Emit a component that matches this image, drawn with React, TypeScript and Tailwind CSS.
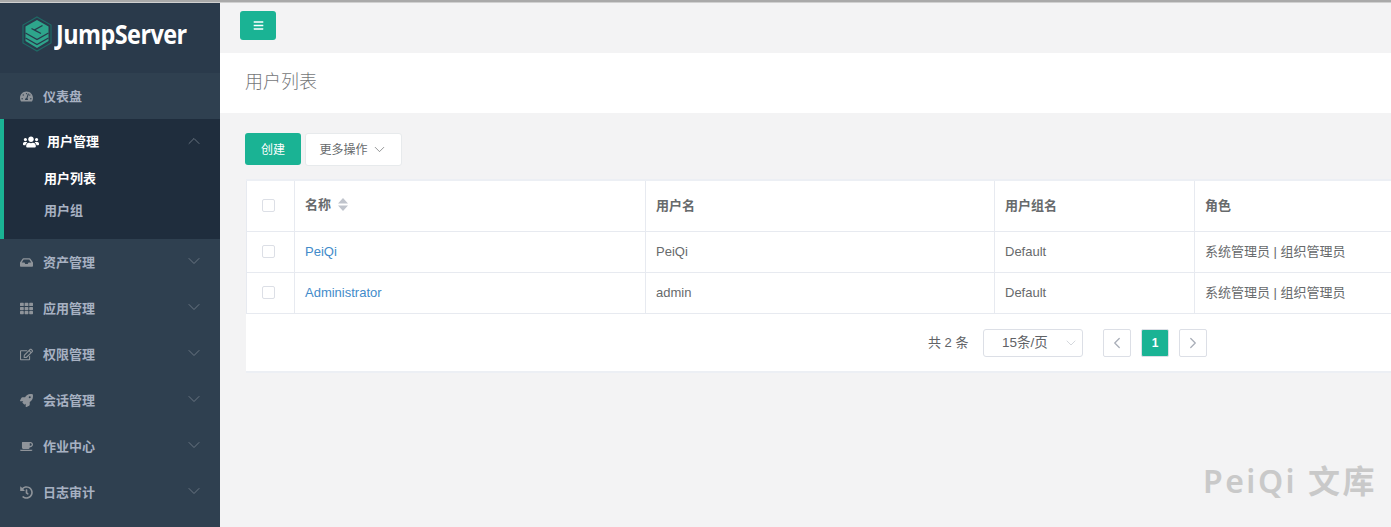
import { ChevronDown, ChevronUp, ChevronLeft, ChevronRight } from 'lucide-react';
import { FaBars, FaCoffee, FaHistory, FaInbox, FaRegEdit, FaRocket, FaTachometerAlt, FaTh, FaUsers } from 'react-icons/fa';
import type { IconType } from 'react-icons';

const FONT = { fontFamily: '"Liberation Sans", "Noto Sans CJK SC", sans-serif' };

const NAV_BELOW: { label: string; icon: IconType }[] = [
  { label: '资产管理', icon: FaInbox },
  { label: '应用管理', icon: FaTh },
  { label: '权限管理', icon: FaRegEdit },
  { label: '会话管理', icon: FaRocket },
  { label: '作业中心', icon: FaCoffee },
  { label: '日志审计', icon: FaHistory },
];

const ROWS = [
  { name: 'PeiQi', username: 'PeiQi', group: 'Default', role: '系统管理员 | 组织管理员' },
  { name: 'Administrator', username: 'admin', group: 'Default', role: '系统管理员 | 组织管理员' },
];

function Logo() {
  return (
    <svg width="32" height="36" viewBox="0 0 32 36" fill="none" aria-hidden="true">
      <path d="M16 1 30 9v18L16 35 2 27V9z" stroke="#1f6a66" strokeWidth="1.2" />
      <path d="M16 4 27.500 10.500V25L16 32 4.500 25V10.500z" fill="#2ea58c" />
      <path d="M21.500 9.500 13.500 14 20 17.500M10.500 12.500 16 15.500" stroke="#293a4b" strokeWidth="1.4" />
      <path d="M4.500 17 16 23.500 27.500 17M4.500 22 16 28.500 27.500 22" stroke="#293a4b" strokeWidth="1.4" />
    </svg>
  );
}

function Checkbox() {
  return <span className="block w-[13px] h-[13px] bg-white border border-[#dcdfe6] rounded-[2px]" />;
}

function NavItem({ label, icon: Icon, chevron = true }: { label: string; icon: IconType; chevron?: boolean }) {
  return (
    <div className="h-[46px] flex items-center pl-5 pr-4 text-[#a7b1c2]">
      <Icon className="w-[13px] h-[13px] text-[#8f949a] shrink-0" />
      <span className="ml-[10px] pt-[1px] text-[13px] font-bold">{label}</span>
      {chevron && <ChevronDown className="ml-auto mb-[3px] w-5 h-5 text-[#75808c]" strokeWidth={1} />}
    </div>
  );
}

export default function App() {
  return (
    <div className="h-[527px] w-[1391px] overflow-hidden bg-[#f3f3f4] flex flex-col" style={FONT}>
      <div className="h-[3px] bg-[#a9a9a9] border-b border-[#d0d0d0] shrink-0" />
      <div className="flex flex-1 min-h-0">
        {/* Sidebar */}
        <aside className="w-[220px] shrink-0 bg-[#2f4050] overflow-hidden">
          <div className="h-[70px] bg-[#2a3a4b] flex items-start pl-[21px] pt-[13px] gap-[3px]">
            <Logo />
            <span className="text-white text-[26px] leading-[36px] font-bold font-['Open_Sans'] tracking-[-0.6px] scale-x-[0.9] origin-left">JumpServer</span>
          </div>
          <NavItem label="仪表盘" icon={FaTachometerAlt} chevron={false} />
          <div className="h-[120px] bg-[#1f2d3d] border-l-4 border-[#1ab394]">
            <div className="h-[46px] flex items-center pl-[19px] pr-4 text-white">
              <FaUsers className="w-4 h-4 shrink-0" />
              <span className="ml-2 text-[13px] font-bold">用户管理</span>
              <ChevronUp className="ml-auto mb-[3px] w-5 h-5 text-[#75808c]" strokeWidth={1} />
            </div>
            <div className="pl-10 text-[13px] font-bold">
              <div className="h-[32px] flex items-center text-white -mt-[2px]">用户列表</div>
              <div className="h-[32px] flex items-center text-[#a7b1c2]">用户组</div>
            </div>
          </div>
          {NAV_BELOW.map((item) => (
            <NavItem key={item.label} {...item} />
          ))}
        </aside>

        {/* Main */}
        <main className="flex-1 min-w-0 relative">
          <div className="h-[50px] pl-5 pt-2">
            <button className="w-9 h-[29px] bg-[#1ab394] rounded-[3px] flex items-center justify-center text-white">
              <FaBars className="w-[11px] h-[11px]" />
            </button>
          </div>
          <div className="h-[60px] bg-white pl-[25px] pb-[2px] flex items-center text-[18px] font-light text-[#757779]">用户列表</div>

          <div className="pl-[25px] pt-5">
            <div className="flex gap-1 h-[33px]">
              <button className="w-[56px] h-[32px] pt-[1px] bg-[#1ab394] rounded-[3px] text-white text-xs">创建</button>
              <button className="w-[97px] h-[33px] bg-white border border-[#e7eaec] rounded-[3px] text-[#676a6c] text-xs flex items-center justify-center gap-[3px]">
                更多操作
                <ChevronDown className="w-[17px] h-[17px]" strokeWidth={1} />
              </button>
            </div>

            {/* Table card */}
            <div className="mt-[13px] ml-[1px] w-[1200px] bg-white border-t-2 border-[#eceff4] border-b-2">
              <table className="border-collapse table-fixed w-full text-[13px] text-[#676a6c]">
                <thead>
                  <tr className="h-[50px] border-b border-[#e7eaf0]">
                    <th className="w-[48px] border-x border-[#e7eaf0] pl-[15px]"><Checkbox /></th>
                    <th className="w-[351px] border-r border-[#e7eaf0] pl-[10px] text-left font-bold">
                      <span className="relative -top-[1px] inline-flex items-center gap-[7px]">
                        名称
                        <svg width="10" height="13" viewBox="0 0 10 13" aria-hidden="true">
                          <path d="M5 0 10 5.500H0zM5 13 0 7.500H10z" fill="#c0c4cc" />
                        </svg>
                      </span>
                    </th>
                    <th className="w-[349px] border-r border-[#e7eaf0] pl-[10px] text-left font-bold">用户名</th>
                    <th className="w-[200px] border-r border-[#e7eaf0] pl-[10px] text-left font-bold">用户组名</th>
                    <th className="pl-[10px] text-left font-bold">角色</th>
                  </tr>
                </thead>
                <tbody>
                  {ROWS.map((row) => (
                    <tr key={row.name} className="h-[41px] border-b border-[#e7eaf0]">
                      <td className="border-x border-[#e7eaf0] pl-[15px]"><Checkbox /></td>
                      <td className="border-r border-[#e7eaf0] pl-[10px] text-[#428bca]">{row.name}</td>
                      <td className="border-r border-[#e7eaf0] pl-[10px]">{row.username}</td>
                      <td className="border-r border-[#e7eaf0] pl-[10px]">{row.group}</td>
                      <td className="pl-[10px]">{row.role}</td>
                    </tr>
                  ))}
                </tbody>
              </table>

              {/* Pagination */}
              <div className="h-[57px] pt-[2px] pl-[682px] flex items-center text-[13px] text-[#606266]">
                <span className="w-[55px]">共 2 条</span>
                <div className="w-[100px] h-[28px] border border-[#dcdfe6] rounded-[3px] flex items-center pl-[18px] pr-[3px] text-[13.5px]">
                  15条/页
                  <ChevronDown className="ml-auto w-4 h-4 text-[#c0c4cc]" strokeWidth={1} />
                </div>
                <button className="ml-5 w-[28px] h-[28px] border border-[#dcdfe6] rounded-[2px] flex items-center justify-center text-[#a9aeb8]">
                  <ChevronLeft className="w-[18px] h-[18px]" strokeWidth={1.75} />
                </button>
                <span className="ml-[10px] w-[28px] h-[28px] bg-[#1ab394] border border-[#dcdfe6] rounded-[2px] flex items-center justify-center text-white text-xs font-bold">1</span>
                <button className="ml-[10px] w-[28px] h-[28px] border border-[#dcdfe6] rounded-[2px] flex items-center justify-center text-[#a9aeb8]">
                  <ChevronRight className="w-[18px] h-[18px]" strokeWidth={1.75} />
                </button>
              </div>
            </div>
          </div>

          {/* watermark */}
          <div className="absolute right-[14px] bottom-[26px] text-[32px] leading-[40px] font-semibold font-['Noto_Sans','Noto_Sans_CJK_SC',sans-serif] text-[#c9c9c9] tracking-[2.5px]">PeiQi 文库</div>
        </main>
      </div>
    </div>
  );
}
